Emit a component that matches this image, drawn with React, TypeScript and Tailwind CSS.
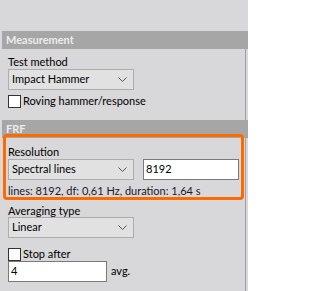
import React from "react";

const font = { fontFamily: "Lato, 'Liberation Sans', sans-serif" };

function Chevron() {
  return (
    <svg width="9" height="5" viewBox="0 0 9 5" className="shrink-0">
      <path d="M0.5 0.5 L4.5 4.5 L8.5 0.5" fill="none" stroke="#555" strokeWidth="1" />
    </svg>
  );
}

function Select({ value, w }: { value: string; w: string }) {
  return (
    <div className={`${w} h-[21px] bg-[#e1e1e1] border border-[#adadad] flex items-center justify-between pl-[3px] pr-[6px] text-[11px] text-black`}>
      <span>{value}</span>
      <Chevron />
    </div>
  );
}

function Checkbox({ label }: { label: string }) {
  return (
    <div className="flex items-center gap-[2px] h-[13px] text-[11px] text-black">
      <div className="w-[13px] h-[13px] bg-white border border-[#333]" />
      <span>{label}</span>
    </div>
  );
}

function Header({ title }: { title: string }) {
  return (
    <div className="h-[18px] bg-[#a6a6a6] flex items-center pl-[4px] text-[11px] font-bold text-[#ececec]">
      {title}
    </div>
  );
}

export default function App() {
  return (
    <div className="relative w-[248px] h-[291px] bg-[#d8d7d9] overflow-hidden" style={font}>
      <div className="pt-[31px] pl-[2px]">
        <Header title="Measurement" />
        <div className="w-[244px] border-r border-[#a0a0a0] pl-[6px] pb-[20px]">
          <div className="pt-[5px] h-[20px] text-[11px] leading-[15px] text-black">Test method</div>
          <Select value="Impact Hammer" w="w-[126px]" />
          <div className="mt-[5px]">
            <Checkbox label="Roving hammer/response" />
          </div>
          <div className="h-[12px]" />
        </div>
      </div>
      <div className="pl-[2px] -mt-[20px]">
        <Header title="FRF" />
        <div className="w-[244px] border-r border-[#a0a0a0] pl-[6px]">
          <div className="pt-[6px] h-[21px] text-[11px] leading-[15px] text-black">Resolution</div>
          <div className="flex gap-[9px]">
            <Select value="Spectral lines" w="w-[126px]" />
            <div className="w-[96px] h-[21px] bg-white border border-[#7a7a7a] flex items-center pl-[2px] text-[11px] text-black">8192</div>
          </div>
          <div className="pt-[3px] h-[17px] text-[11px] leading-[15px] text-[#1a1a2e]">lines: 8192, df: 0,61 Hz, duration: 1,64 s</div>
          <div className="pt-[8px] h-[20px] text-[11px] leading-[12px] text-black">Averaging type</div>
          <Select value="Linear" w="w-[126px]" />
          <div className="mt-[10px]">
            <Checkbox label="Stop after" />
          </div>
          <div className="flex items-center gap-[4px]">
            <div className="w-[99px] h-[21px] bg-white border border-[#7a7a7a] flex items-center pl-[2px] text-[11px] text-black">4</div>
            <span className="text-[11px] text-black">avg.</span>
          </div>
          <div className="h-[20px]" />
        </div>
      </div>
      <div className="absolute left-[3px] top-[134px] w-[241px] h-[66px] border-[3px] border-[#ff6a00] rounded-[4px] pointer-events-none" />
    </div>
  );
}
